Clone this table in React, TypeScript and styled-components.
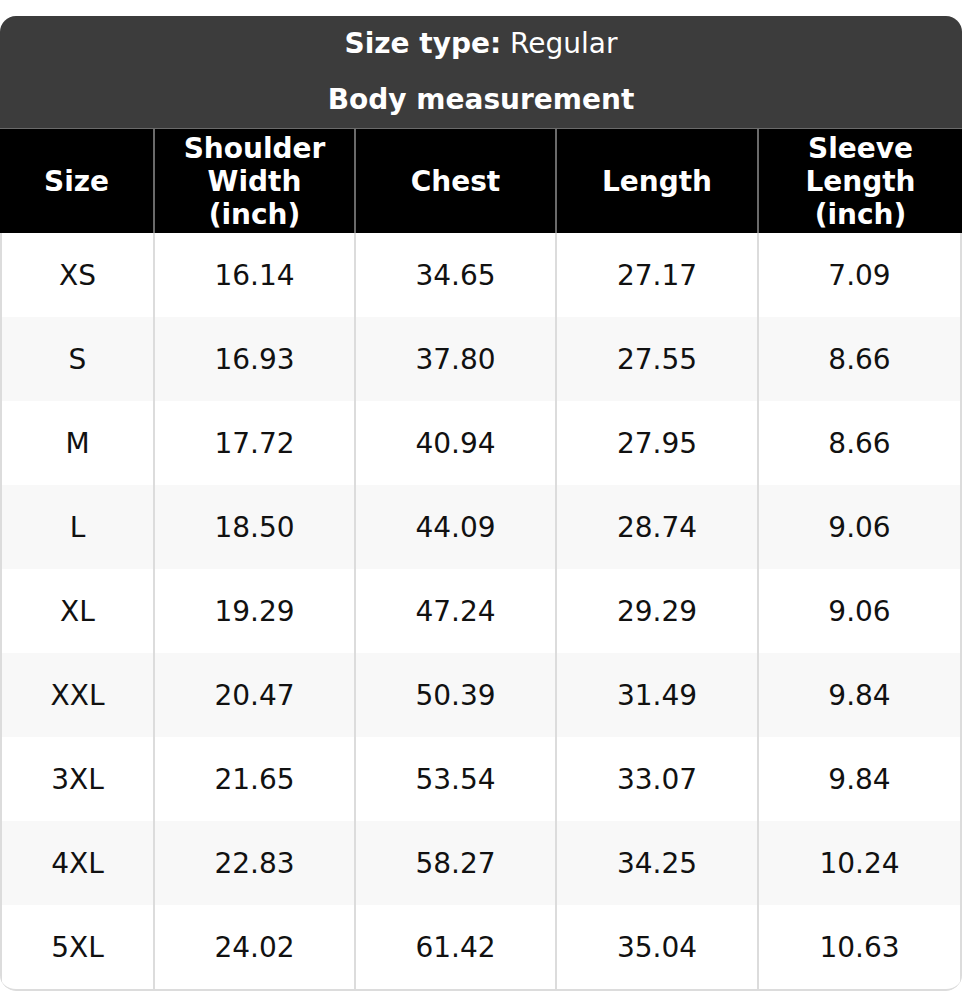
import { createGlobalStyle } from 'styled-components';
import styled from 'styled-components';

const GlobalStyle = createGlobalStyle`
  html, body {
    margin: 0;
    padding: 0;
    background: #fff;
  }
  body {
    padding-top: 16px;
    font-family: 'DejaVu Sans', 'Liberation Sans', sans-serif;
  }
`;

const columns = ['Size', 'Shoulder Width (inch)', 'Chest', 'Length', 'Sleeve Length (inch)'];

const rows: string[][] = [
  ['XS', '16.14', '34.65', '27.17', '7.09'],
  ['S', '16.93', '37.80', '27.55', '8.66'],
  ['M', '17.72', '40.94', '27.95', '8.66'],
  ['L', '18.50', '44.09', '28.74', '9.06'],
  ['XL', '19.29', '47.24', '29.29', '9.06'],
  ['XXL', '20.47', '50.39', '31.49', '9.84'],
  ['3XL', '21.65', '53.54', '33.07', '9.84'],
  ['4XL', '22.83', '58.27', '34.25', '10.24'],
  ['5XL', '24.02', '61.42', '35.04', '10.63'],
];

function App(): React.ReactElement {
  return (
    <>
      <GlobalStyle />
      <Chart>
        <Caption>
          <p>
            <b>Size type:</b> Regular
          </p>
          <p>
            <b>Body measurement</b>
          </p>
        </Caption>
        <HeadRow>
          {columns.map((label) => (
            <HeadCell key={label}>
              <span>{label}</span>
            </HeadCell>
          ))}
        </HeadRow>
        {rows.map((row, index) => (
          <BodyRow key={row[0]} $striped={index % 2 === 1}>
            {row.map((value, i) => (
              // eslint-disable-next-line react/no-array-index-key
              <BodyCell key={i}>{value}</BodyCell>
            ))}
          </BodyRow>
        ))}
      </Chart>
    </>
  );
}

export default App;

const Chart = styled.div`
  width: 962px;
  border-radius: 16px;
  overflow: hidden;
  font-size: 28px;
`;

const Caption = styled.div`
  background-color: #3c3c3c;
  color: #fff;
  text-align: center;
  border-bottom: 1px solid #6a6a6a;

  & p {
    margin: 0;
    height: 56px;
    line-height: 56px;
  }
`;

const Grid = styled.div`
  display: grid;
  grid-template-columns: 155px 201px 201px 202px 1fr;
`;

const HeadRow = styled(Grid)`
  background-color: #000;
  color: #fff;
  font-weight: 700;
  height: 104px;
`;

const HeadCell = styled.div`
  display: flex;
  align-items: center;
  justify-content: center;
  text-align: center;
  line-height: 33px;
  padding: 0 20px;
  border-right: 2px solid #6a6a6a;

  &:last-child {
    border-right: none;
  }
`;

const BodyRow = styled(Grid)<{ $striped: boolean }>`
  height: 84px;
  background-color: ${({ $striped }) => ($striped ? '#f8f8f8' : '#fff')};

  &:last-child {
    height: 86px;
    border-bottom: 2px solid #dcdcdc;
    border-radius: 0 0 16px 16px;
    box-sizing: border-box;
  }
`;

const BodyCell = styled.div`
  display: flex;
  align-items: center;
  justify-content: center;
  color: #111;
  border-right: 2px solid #dcdcdc;

  &:first-child {
    border-left: 2px solid #dcdcdc;
  }

  &:last-child {
    border-right: 2px solid #dcdcdc;
  }
`;
